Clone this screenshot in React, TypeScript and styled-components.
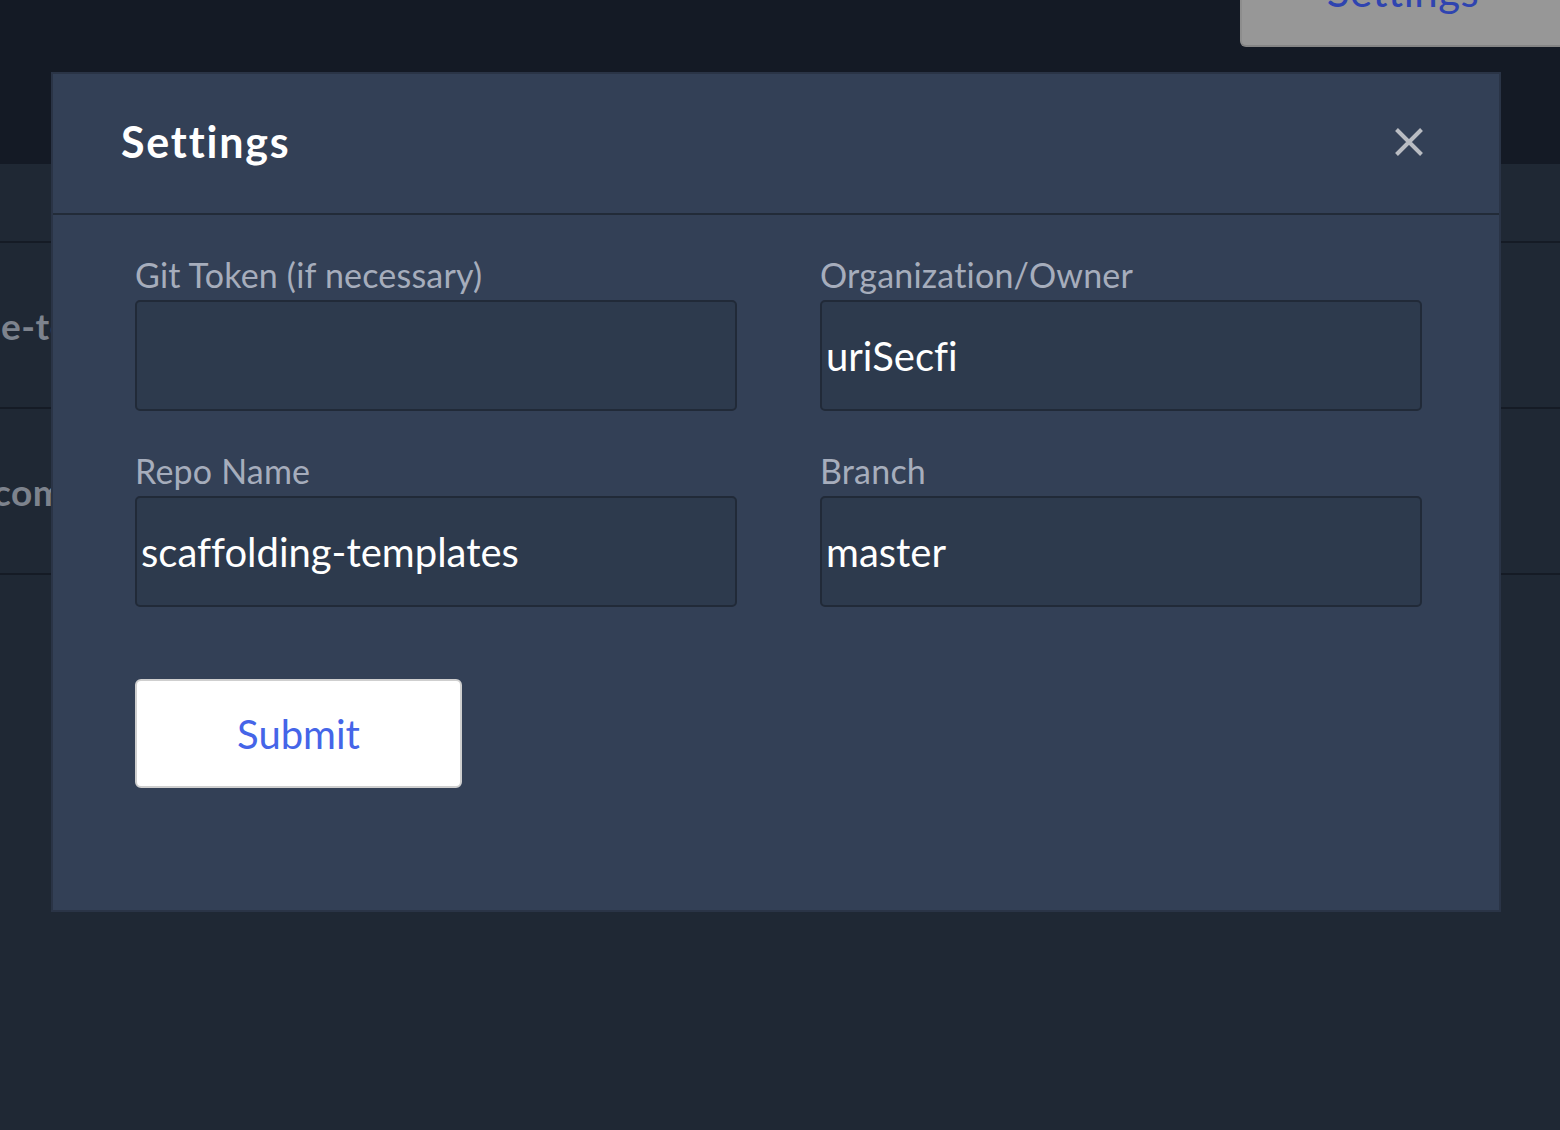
import styled, { createGlobalStyle } from 'styled-components';
import { useState } from 'react';

const GlobalStyle = createGlobalStyle`
    body {
        margin: 0;
        background-color: #1f2834;
        font-family: Lato, "Noto Sans", sans-serif;
        font-variant-ligatures: none;
    }
    input, button {
        font-variant-ligatures: none;
    }
`

const Page = styled.div`
    position: relative;
    min-height: 1130px;
    overflow: hidden;
`

const TopBar = styled.div`
    height: 164px;
    background-color: #141a25;
    display: flex;
    justify-content: flex-end;
    align-items: flex-start;
`

const SettingsTab = styled.button`
    width: 328px;
    height: 110px;
    margin-top: -63px;
    margin-right: -8px;
    background-color: #979797;
    border: none;
    border-bottom: 2px solid #858585;
    border-left: 2px solid #8d8d8d;
    border-radius: 6px;
    color: #2f44b0;
    font-family: Lato, sans-serif;
    font-size: 42px;
    letter-spacing: 0.5px;
    padding: 0 4px 0 0;
`

const HeadRow = styled.div`
    height: 77px;
    border-bottom: 2px solid #151b25;
`

const Row = styled.div`
    height: 164px;
    border-bottom: 2px solid #151b25;
    display: flex;
    align-items: center;
`

const RowText = styled.span<{ $shift: number }>`
    margin-left: ${(p) => p.$shift}px;
    font-size: 37px;
    font-weight: 700;
    letter-spacing: 0.5px;
    color: #7d838d;
    white-space: nowrap;
`

const Modal = styled.div`
    position: absolute;
    left: 51px;
    top: 72px;
    width: 1446px;
    height: 836px;
    background-color: #334056;
    border: 2px solid #2a3446;
    display: flex;
    flex-direction: column;
`

const ModalHeader = styled.div`
    height: 141px;
    border-bottom: 2px solid #222b38;
    display: flex;
    justify-content: space-between;
    align-items: center;
    padding: 0 75px 4px 68px;
    box-sizing: border-box;
`

const Title = styled.h2`
    margin: 0;
    font-size: 43px;
    font-weight: 700;
    letter-spacing: 1.8px;
    color: #fff;
`

const CloseBtn = styled.button`
    background: none;
    border: none;
    padding: 0;
    width: 30px;
    height: 30px;
    cursor: pointer;
    display: flex;
`

const ModalBody = styled.div`
    padding: 40px 0 0 82px;
`

const FieldGrid = styled.div`
    display: grid;
    grid-template-columns: 602px 602px;
    column-gap: 83px;
    row-gap: 40px;
`

const Field = styled.label`
    display: flex;
    flex-direction: column;
`

const Label = styled.span`
    font-size: 34px;
    line-height: 40px;
    letter-spacing: 0.2px;
    color: #a6adbc;
    margin-bottom: 5px;
`

const Input = styled.input`
    height: 111px;
    box-sizing: border-box;
    background-color: #2d3a4d;
    border: 2px solid #212a38;
    border-radius: 5px;
    padding: 0 4px;
    color: #fff;
    font-family: Lato, sans-serif;
    font-size: 40px;
    :focus {
        outline: none;
    }
`

const SubmitBtn = styled.button`
    margin-top: 72px;
    width: 327px;
    height: 109px;
    background-color: #fff;
    border: 2px solid #cfcfcf;
    border-radius: 6px;
    color: #4565e8;
    font-family: Lato, sans-serif;
    font-size: 40px;
    cursor: pointer;
`

const App = () => {
    const [fields, setFields] = useState({
        token: '',
        owner: 'uriSecfi',
        repo: 'scaffolding-templates',
        branch: 'master',
    });

    const update = (key: keyof typeof fields, value: string) => {
        setFields({ ...fields, [key]: value });
    }

    return (
        <>
            <GlobalStyle />
            <Page>
                <TopBar>
                    <SettingsTab>Settings</SettingsTab>
                </TopBar>
                <HeadRow />
                <Row><RowText $shift={1}>e-templates</RowText></Row>
                <Row><RowText $shift={-7}>com/uriSecfi</RowText></Row>

                <Modal>
                    <ModalHeader>
                        <Title>Settings</Title>
                        <CloseBtn aria-label="Close">
                            <svg width="30" height="30" viewBox="0 0 30 30">
                                <path d="M2.5 2.5 L27.5 27.5 M27.5 2.5 L2.5 27.5" stroke="#b9bcc2" strokeWidth="4" />
                            </svg>
                        </CloseBtn>
                    </ModalHeader>
                    <ModalBody>
                        <FieldGrid>
                            <Field>
                                <Label>Git Token (if necessary)</Label>
                                <Input value={fields.token} onChange={(e) => update('token', e.target.value)} />
                            </Field>
                            <Field>
                                <Label>Organization/Owner</Label>
                                <Input value={fields.owner} onChange={(e) => update('owner', e.target.value)} />
                            </Field>
                            <Field>
                                <Label>Repo Name</Label>
                                <Input value={fields.repo} onChange={(e) => update('repo', e.target.value)} />
                            </Field>
                            <Field>
                                <Label>Branch</Label>
                                <Input value={fields.branch} onChange={(e) => update('branch', e.target.value)} />
                            </Field>
                        </FieldGrid>
                        <SubmitBtn>Submit</SubmitBtn>
                    </ModalBody>
                </Modal>
            </Page>
        </>
    )
}

export default App;
